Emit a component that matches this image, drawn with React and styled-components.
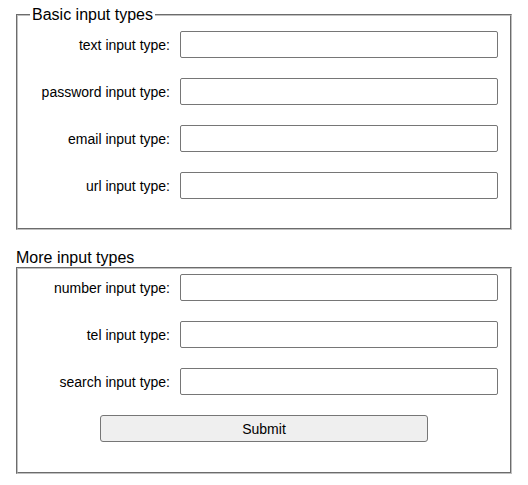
import React from "react";
import styled, { createGlobalStyle } from "styled-components";

const basicFields = [
  { label: "text input type:", type: "text" },
  { label: "password input type:", type: "password" },
  { label: "email input type:", type: "email" },
  { label: "url input type:", type: "url" },
];

const moreFields = [
  { label: "number input type:", type: "number" },
  { label: "tel input type:", type: "tel" },
  { label: "search input type:", type: "search" },
];

const FieldRows = ({ fields }) =>
  fields.map((f) => (
    <Row key={f.type}>
      <Label htmlFor={`in-${f.type}`}>{f.label}</Label>
      <Input id={`in-${f.type}`} type={f.type} />
    </Row>
  ));

const App = () => {
  return (
    <>
      <GlobalStyle />
      <Page>
        <Form onSubmit={(e) => e.preventDefault()}>
          <Fieldset>
            <Legend>Basic input types</Legend>
            <Rows>
              <FieldRows fields={basicFields} />
            </Rows>
          </Fieldset>

          <Section>
            <SectionTitle>More input types</SectionTitle>
            <Box>
              <Rows>
                <FieldRows fields={moreFields} />
              </Rows>
              <ButtonRow>
                <SubmitButton type="submit">Submit</SubmitButton>
              </ButtonRow>
            </Box>
          </Section>
        </Form>
      </Page>
    </>
  );
};

export default App;

const GlobalStyle = createGlobalStyle`
  body {
    margin: 0;
    background: #fff;
    font-family: "Liberation Sans", Arial, sans-serif;
    color: #000;
  }
`;

const Page = styled.div`
  padding: 6px 0 0 16px;
`;

const Form = styled.form`
  width: 496px;
  display: flex;
  flex-direction: column;
  gap: 18px;
`;

const Fieldset = styled.fieldset`
  margin: 0;
  padding: 7px 12px 29px;
  border: 2px groove #c0c0c0;
  min-width: 0;
`;

const Legend = styled.legend`
  padding: 0 2px;
  font-size: 16px;
  line-height: 18px;
`;

const Section = styled.div`
  display: flex;
  flex-direction: column;
`;

const SectionTitle = styled.div`
  font-size: 16px;
  line-height: 19px;
`;

const Box = styled.div`
  border: 2px groove #c0c0c0;
  padding: 5px 12px 30px;
  display: flex;
  flex-direction: column;
  gap: 20px;
`;

const Rows = styled.div`
  display: flex;
  flex-direction: column;
  gap: 20px;
`;

const Row = styled.div`
  display: grid;
  grid-template-columns: 140px 1fr;
  column-gap: 10px;
  align-items: center;
`;

const Label = styled.label`
  text-align: right;
  font-size: 14px;
  white-space: nowrap;
`;

const Input = styled.input`
  box-sizing: border-box;
  height: 27px;
  width: 100%;
  margin: 0;
  padding: 1px 4px;
  border: 1px solid #767676;
  border-radius: 2px;
  background: #fff;
  font-family: "Liberation Sans", Arial, sans-serif;
  font-size: 14px;
`;

const ButtonRow = styled.div`
  display: flex;
  justify-content: center;
`;

const SubmitButton = styled.button`
  box-sizing: border-box;
  width: 328px;
  height: 27px;
  margin: 0;
  border: 1px solid #767676;
  border-radius: 3px;
  background: #efefef;
  font-family: "Liberation Sans", Arial, sans-serif;
  font-size: 14px;
  color: #000;
`;
